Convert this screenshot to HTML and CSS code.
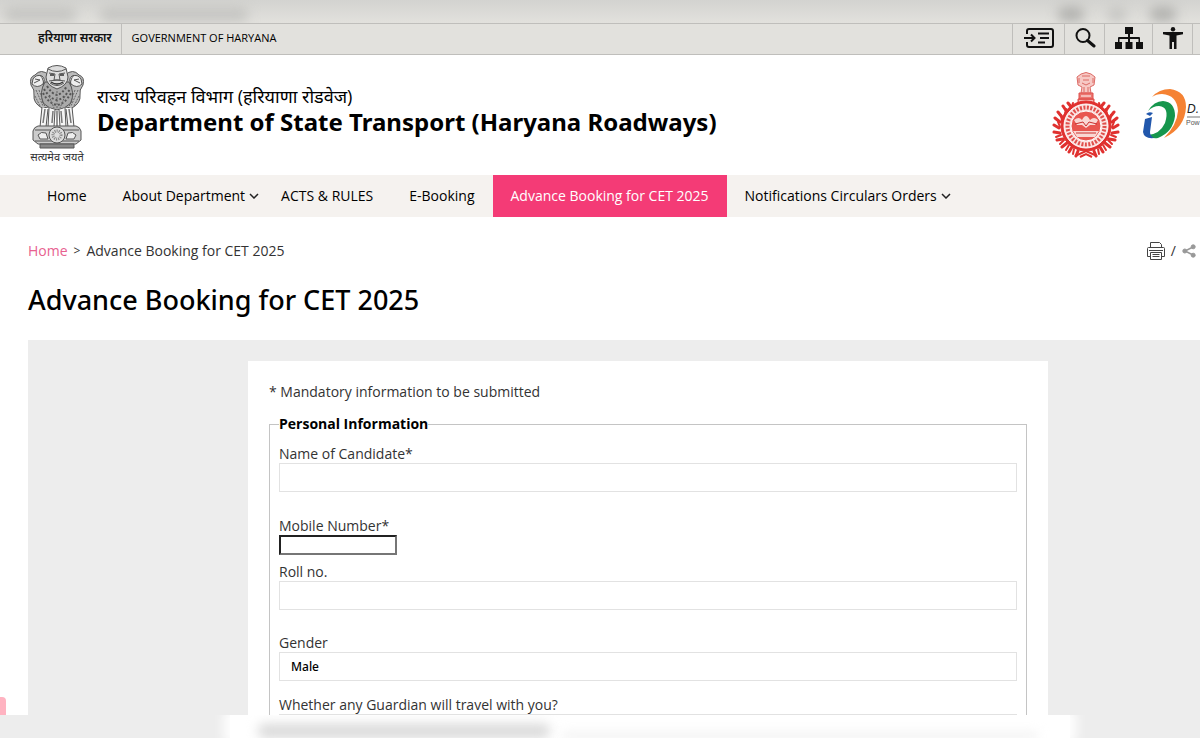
FILE: index.html
```
<!DOCTYPE html>
<html lang="en">
<head>
  <meta charset="UTF-8" />
  <meta name="viewport" content="width=device-width, initial-scale=1.0"/>
  <title>Advance Booking for CET 2025 | Department of State Transport</title>
  <link rel="stylesheet" href="styles.css">
</head>
<body>

  <div class="strip strip-top">
    <span class="smudge smudge-hindi"></span>
    <span class="smudge smudge-gov"></span>
    <span class="smudge smudge-icon"></span>
    <span class="smudge smudge-icon light"></span>
    <span class="smudge smudge-icon"></span>
  </div>

  <div class="page">
    <div class="gov-bar">
      <a href="#" class="gov-hindi" lang="hi">हरियाणा सरकार</a>
      <a href="#" class="gov-english">GOVERNMENT OF HARYANA</a>
      <div class="gov-tools">
        <button type="button" class="tool tool-skip" aria-label="Skip to main content">
          <svg width="32" height="22" viewBox="0 0 32 22" fill="none" stroke="#111" stroke-width="2">
            <path d="M4 7V4Q4 2 6 2H28Q30 2 30 4V18Q30 20 28 20H6Q4 20 4 18V15"/>
            <path d="M1 11H11M8 7.500L11.500 11L8 14.500M15 6.500H26M17 11H26M15 15.500H22"/>
          </svg>
        </button>
        <button type="button" class="tool tool-search" aria-label="Search">
          <svg width="22" height="22" viewBox="0 0 22 22" fill="none" stroke="#111">
            <circle cx="9" cy="8.500" r="6.500" stroke-width="2"/>
            <path d="M13.500 13.500L20 19" stroke-width="3" stroke-linecap="round"/>
          </svg>
        </button>
        <button type="button" class="tool tool-map" aria-label="Sitemap">
          <svg width="28" height="22" viewBox="0 0 28 22" fill="#111">
            <path d="M10 0H18V7H15V10H24Q25 10 25 11V15H28V22H21V15H23.500V12H15V15H17.500V22H10.500V15H13V12H4.500V15H7V22H0V15H3V11Q3 10 4 10H13V7H10Z"/>
          </svg>
        </button>
        <button type="button" class="tool tool-access" aria-label="Accessibility">
          <svg width="22" height="22" viewBox="0 0 22 22" fill="#111">
            <circle cx="11" cy="2.200" r="2.200"/>
            <path d="M1 5H21V7.200L14.500 8.500V22H12V15H10V22H7.500V8.500L1 7.200Z"/>
          </svg>
        </button>
      </div>
    </div>

    <header class="header">
      <a href="#" class="brand">
        <span class="emblem">
          <svg width="56" height="84" viewBox="0 0 56 84" fill="none" stroke="#555" stroke-width="1">
            <!-- side lions -->
            <path fill="#bbb" d="M20 10Q12 3 6 10Q0 12 2 20Q6 25 5 30Q4 38 13 43L20 42ZM36 10Q44 3 50 10Q56 12 54 20Q50 25 51 30Q52 38 43 43L36 42Z"/>
            <path fill="#eee" d="M4 14Q7 9 13 11Q17 14 14 19Q8 24 3 19ZM52 14Q49 9 43 11Q39 14 42 19Q48 24 53 19Z"/>
            <path d="M6 14L11 15L5 18M50 14L45 15L51 18M11 10Q16 15 14 24M45 10Q40 15 42 24"/>
            <!-- front lion -->
            <path fill="#aaa" d="M16 17Q10 27 14 38Q20 44 28 45Q36 44 42 38Q46 27 40 17Z"/>
            <path fill="#ddd" d="M19 3Q28 -2 37 3L39 12Q39 20 28 24Q17 20 17 12Z"/>
            <path d="M19 4Q28 9 37 4M20 8L26 9M30 9L36 8M26 9L25 15H31L30 9M20 16Q28 14 36 16M21 18Q28 23 35 18"/>
            <path stroke="#333" stroke-width="1.500" d="M21 10H25M31 10H35M22 17Q28 21 34 17"/>
            <path stroke="#555" stroke-width="2" stroke-dasharray="2 2" d="M15 24Q21 34 28 35Q35 34 41 24M14 28Q20 39 28 40Q36 39 42 28M18 21Q23 29 28 30Q33 29 38 21"/>
            <path stroke="#666" stroke-dasharray="2 1" d="M7 25L14 41M10 25L16 42M49 25L42 41M46 25L40 42M6 31L11 41M50 31L45 41M20 31L25 43M36 31L31 43M28 26V44"/>
            <!-- legs -->
            <path fill="#f5f5f5" d="M13 42L11 62H17L19 44M43 42L45 62H39L37 44M20 43L19 62H25L26 45M36 43L37 62H31L30 45"/>
            <path stroke="#777" stroke-width="1.500" d="M16 44L14 58M40 44L42 58M24 46L23 58M32 46L33 58M28 46V62"/>
            <!-- base -->
            <path fill="#ccc" d="M9 61H47Q51 62 52 66V75L47 79H9L4 75V66Q5 62 9 61Z"/>
            <path fill="#888" d="M11 79H45V83H11Z"/>
            <path d="M6 65H50M6 76H50M9 70Q12 66 17 68L19 74H11ZM47 70Q44 66 39 68L37 74H45Z" fill="#eee"/>
            <circle cx="28" cy="70" r="8" fill="#ddd"/>
            <circle cx="28" cy="70" r="4" stroke-dasharray="1 1" stroke-width="3" stroke="#888"/>
          </svg>
          <span class="motto" lang="hi">सत्यमेव जयते</span>
        </span>
        <span class="brand-text">
          <span class="brand-hindi" lang="hi">राज्य परिवहन विभाग (हरियाणा रोडवेज)</span>
          <strong class="brand-name">Department of State Transport (Haryana Roadways)</strong>
        </span>
      </a>
      <div class="logos">
        <svg class="haryana" width="68" height="87" viewBox="0 0 68 87" fill="none" stroke="#e0312f">
          <!-- pillar -->
          <path fill="#f7c9c5" stroke="#dc6a65" d="M29 2Q34 -1 39 2L43 5L42 13L38 15L39 21H29L30 15L26 13L25 5Z"/>
          <path stroke="#dc6a65" d="M30 4L38 4M31 8H37M30 11L34 13L38 11M32 15V20M36 15V20M27 6V11M41 6V11"/>
          <path fill="#eb7670" stroke="#e0514c" d="M27 21H41V27H27ZM26 27H42V32L48 38H20L26 32Z"/>
          <path stroke="#fff" d="M29 24H39M27 29H41"/>
          <!-- wreath leaves -->
          <g stroke-width="3" stroke-linecap="round">
            <path d="M16 31L20 36M11 34L15 40M6 40L10 45M3 46L8 50M2 53L7 56M2 60L8 61M5 68L11 67M10 75L15 71M17 80L20 75M24 84L26 79"/>
            <path d="M52 31L48 36M57 34L53 40M62 40L58 45M65 46L60 50M66 53L61 56M66 60L60 61M63 68L57 67M58 75L53 71M51 80L48 75M44 84L42 79"/>
          </g>
          <g stroke-width="2" stroke-linecap="round">
            <path d="M21 31L19 37M14 37L13 43M9 43L10 49M6 50L8 55M4 65L9 63M8 72L12 68M14 78L17 73M21 82L22 77"/>
            <path d="M47 31L49 37M54 37L55 43M59 43L58 49M62 50L60 55M64 65L59 63M60 72L56 68M54 78L51 73M47 82L46 77"/>
          </g>
          <path stroke-width="2" d="M23 84L34 79L45 84M28 85L34 82L40 85"/>
          <!-- seal -->
          <circle cx="34" cy="54" r="25" fill="#e0312f"/>
          <circle cx="34" cy="54" r="22" stroke="#fff" fill="#fbe3e1"/>
          <circle cx="34" cy="54" r="18.500" stroke="#e0504c" stroke-width="4" stroke-dasharray="2 1.500"/>
          <circle cx="34" cy="54" r="15" fill="#e85650" stroke="#fff"/>
          <path fill="#f9d8d4" stroke="none" d="M22 48Q27 44 30 48Q34 40 38 48Q42 44 46 48L43 53H38L34 56L30 53H25ZM21 59H47L43 65H25Z"/>
          <path stroke="#c9302f" d="M23 52L31 50L34 54L37 50L45 52M24 61H44"/>
        </svg>
        <svg class="digital" width="57" height="52" viewBox="0 0 57 52">
          <path fill="#f58233" d="M9 8Q16 0 27 0Q43 2 43 18Q42 39 21 49Q34 36 35 22Q34 6 19 5Q13 5 9 8Z"/>
          <path fill="#16964d" d="M5 22Q11 12 20 12Q32 13 32 27Q30 43 15 49Q8 50 5 46Q17 45 22 34Q27 18 16 17Q10 17 5 22Z"/>
          <path fill="#2157ac" d="M2 30L9 28L7 43Q7 47 11 49Q1 50 0 43Z"/>
          <path fill="#2157ac" d="M3 25Q6 22 10 24L7 27Z"/>
          <text x="44" y="24" class="digital-name">D.</text>
          <path stroke="#777" d="M44 28H57"/>
          <text x="43" y="36" class="digital-note">Pow</text>
        </svg>
      </div>
    </header>

    <nav class="nav">
      <a href="#">Home</a>
      <a href="#" class="has-menu">About Department
        <svg width="10" height="6" viewBox="0 0 10 6" fill="none" stroke="#222" stroke-width="1.500"><path d="M1 1L5 5L9 1"/></svg>
      </a>
      <a href="#">ACTS &amp; RULES</a>
      <a href="#">E-Booking</a>
      <a href="#" class="active">Advance Booking for CET 2025</a>
      <a href="#" class="has-menu">Notifications Circulars Orders
        <svg width="10" height="6" viewBox="0 0 10 6" fill="none" stroke="#222" stroke-width="1.500"><path d="M1 1L5 5L9 1"/></svg>
      </a>
    </nav>

    <main class="main">
      <div class="crumb-row">
        <div class="crumbs">
          <a href="#">Home</a>
          <span class="sep">&gt;</span>
          <span>Advance Booking for CET 2025</span>
        </div>
        <div class="page-tools">
          <button type="button" aria-label="Print">
            <svg width="18" height="18" viewBox="0 0 18 18" fill="none" stroke="#444">
              <path d="M3.500 5.500V.5H12.500L14.500 2.500V5.500M3.500 14.500H.5V6.500Q.5 5.500 1.500 5.500H16.500Q17.500 5.500 17.500 6.500V14.500H14.500M3.500 10.500H14.500V17.500H3.500ZM2 8.500H16M5.500 12.500H12.500M5.500 14.500H12.500"/>
            </svg>
          </button>
          <span>/</span>
          <button type="button" aria-label="Share">
            <svg width="14" height="14" viewBox="0 0 14 14" fill="#999" stroke="#999">
              <path fill="none" stroke-width="1.500" d="M11 3L3 7L11 11"/>
              <circle cx="11.200" cy="2.800" r="2"/><circle cx="2.800" cy="7" r="2"/><circle cx="11.200" cy="11.200" r="2"/>
            </svg>
          </button>
        </div>
      </div>

      <h1>Advance Booking for CET 2025</h1>

      <div class="panel">
        <form class="form-card" action="#" method="POST">
          <p class="note">* Mandatory information to be submitted</p>
          <fieldset>
            <legend>Personal Information</legend>
            <div class="form-group">
              <label for="name">Name of Candidate*</label>
              <input type="text" id="name" name="name">
            </div>
            <div class="form-group mobile">
              <label for="mobile">Mobile Number*</label>
              <input type="tel" id="mobile" name="mobile">
            </div>
            <div class="form-group">
              <label for="roll">Roll no.</label>
              <input type="text" id="roll" name="roll">
            </div>
            <div class="form-group gender">
              <label for="gender">Gender</label>
              <select id="gender" name="gender">
                <option>Male</option>
                <option>Female</option>
              </select>
            </div>
            <div class="form-group">
              <label for="guardian">Whether any Guardian will travel with you?</label>
              <select id="guardian" name="guardian">
                <option>No</option>
                <option>Yes</option>
              </select>
            </div>
          </fieldset>
        </form>
      </div>
    </main>
    <button type="button" class="side-tab" aria-label="Feedback"></button>
  </div>

  <div class="strip strip-bottom">
    <div class="strip-card">
      <span class="smudge smudge-label"></span>
      <span class="smudge smudge-line"></span>
    </div>
  </div>

</body>
</html>
```
FILE: styles.css
```
:root {
  --bar: #e2e1dd;
  --bar-line: #bfbebb;
  --nav: #f5f2ef;
  --pink: #f43b76;
  --grey: #ededed;
  --text: #333333;
}

* {
  box-sizing: border-box;
  margin: 0;
  padding: 0;
}

body {
  display: flex;
  flex-direction: column;
  height: 100vh;
  overflow: hidden;
  font-family: "Open Sans", "Noto Sans", sans-serif;
  font-size: 14px;
  line-height: 20px;
  color: var(--text);
  background-color: #ffffff;
}

a {
  color: inherit;
  text-decoration: none;
}

button {
  border: none;
  background: none;
  cursor: pointer;
}

svg {
  display: block;
  flex-shrink: 0;
}

/* blurred edges above and below the page */
.strip {
  display: flex;
  flex-shrink: 0;
  height: 23px;
  overflow: hidden;
}

.strip-top {
  align-items: center;
  gap: 24px;
  padding: 5px 24px 0 4px;
  background: linear-gradient(#d3d3d0, var(--bar));
}

.smudge {
  height: 14px;
  border-radius: 6px;
  background-color: #c4c4c1;
  filter: blur(6px);
}

.smudge-hindi {
  width: 72px;
}

.smudge-gov {
  width: 148px;
  margin-right: auto;
}

.smudge-icon {
  width: 26px;
  background-color: #b0b0ad;
}

.smudge-icon.light {
  width: 18px;
  background-color: #c4c4c1;
}

.strip-bottom {
  background-color: var(--grey);
}

.strip-card {
  display: flex;
  flex: 1;
  align-items: center;
  gap: 12px;
  margin: 0 130px 0 230px;
  padding: 8px 32px 0 28px;
  background-color: #ffffff;
  box-shadow: 0 0 12px 6px #ffffff;
}

.smudge-label {
  width: 292px;
  background-color: #d8d8d8;
}

.smudge-line {
  flex: 1;
  height: 4px;
  align-self: flex-end;
  background-color: #e4e4e4;
}

.page {
  position: relative;
  display: flex;
  flex: 1;
  flex-direction: column;
  min-height: 0;
  overflow: hidden;
}

.gov-bar {
  display: flex;
  flex-shrink: 0;
  height: 32px;
  padding-right: 7px;
  font-size: 11px;
  font-weight: 600;
  line-height: 28px;
  color: #111111;
  background-color: var(--bar);
  border-top: 1px solid var(--bar-line);
  border-bottom: 1px solid var(--bar-line);
}

.gov-hindi {
  padding: 0 9px 0 38px;
  font-size: 12px;
  border-right: 1px solid var(--bar-line);
}

.gov-english {
  padding-left: 10px;
  font-weight: 500;
  color: #000000;
}

.gov-tools {
  display: flex;
  margin-left: auto;
  border-right: 1px solid var(--bar-line);
}

.tool {
  display: flex;
  align-items: center;
  justify-content: center;
  width: 48px;
  padding-bottom: 2px;
  border-left: 1px solid var(--bar-line);
}

.tool-skip {
  width: 52px;
}

.tool-search,
.tool-access {
  width: 40px;
}

.header {
  display: flex;
  flex-shrink: 0;
  align-items: center;
  justify-content: space-between;
  height: 120px;
  padding-left: 29px;
}

.brand {
  display: flex;
  align-items: center;
  gap: 12px;
  color: #000000;
}

.emblem {
  display: flex;
  flex-direction: column;
  align-items: center;
  width: 56px;
}

.motto {
  font-size: 11px;
  line-height: 16px;
  color: #333333;
  white-space: nowrap;
}

.brand-text {
  display: flex;
  flex-direction: column;
  padding-bottom: 10px;
}

.brand-hindi {
  font-size: 18px;
  line-height: 24px;
}

.brand-name {
  font-family: "Noto Sans", sans-serif;
  font-size: 24px;
  line-height: 28px;
}

.logos {
  display: flex;
  align-items: center;
  gap: 23px;
}

.digital-name {
  font: italic 12px "Liberation Sans", sans-serif;
  fill: #222222;
}

.digital-note {
  font: 7px "Liberation Sans", sans-serif;
  fill: #555555;
}

.nav {
  display: flex;
  flex-shrink: 0;
  height: 42px;
  padding-left: 29px;
  font-weight: 500;
  line-height: 42px;
  color: #000000;
  background-color: var(--nav);
}

.nav a {
  padding: 0 18px;
  white-space: nowrap;
}

.nav .has-menu {
  display: flex;
  align-items: center;
  gap: 4px;
  padding-right: 4px;
}

.nav .active {
  color: #ffffff;
  background-color: var(--pink);
}

.main {
  display: flex;
  flex: 1;
  flex-direction: column;
  padding-left: 28px;
}

.crumb-row {
  display: flex;
  align-items: center;
  justify-content: space-between;
  height: 20px;
  margin-top: 24px;
  padding-right: 4px;
}

.crumbs,
.page-tools {
  display: flex;
  align-items: center;
  gap: 6px;
}

.crumbs a {
  color: #e8618f;
}

.sep {
  font-size: 12px;
}

h1 {
  margin: 20px 0 21px;
  font-family: "Noto Sans", sans-serif;
  font-size: 27px;
  font-weight: 500;
  line-height: 38px;
  color: #000000;
}

.panel {
  flex: 1;
  padding: 21px 152px 0 220px;
  background-color: var(--grey);
}

.form-card {
  padding: 21px 21px 20px;
  background-color: #ffffff;
}

fieldset {
  margin-top: 12px;
  padding: 0 9px 20px;
  border: 1px solid #c4c4c4;
}

legend {
  font-weight: 700;
  line-height: 20px;
  color: #000000;
}

.form-group {
  display: flex;
  flex-direction: column;
  align-items: flex-start;
  margin-bottom: 24px;
}

legend + .form-group {
  margin: 11px 0 25px;
}

.form-group label {
  font-weight: 500;
  line-height: 18px;
}

.form-group input,
.form-group select {
  width: 100%;
  height: 29px;
  padding: 0 11px;
  border: 1px solid #e2e2e2;
  font: 500 12px "Noto Sans", sans-serif;
  color: #000000;
  background-color: #ffffff;
  appearance: none;
}

.form-group.mobile {
  margin-bottom: 8px;
}

.form-group.gender {
  margin-bottom: 15px;
}

.form-group.mobile input {
  width: 118px;
  height: 20px;
  padding: 0 2px;
  border: 2px inset #767676;
}

.side-tab {
  position: absolute;
  bottom: 0;
  left: 0;
  width: 6px;
  height: 18px;
  border-radius: 0 4px 0 0;
  background-color: #ffb3c1;
}
```
